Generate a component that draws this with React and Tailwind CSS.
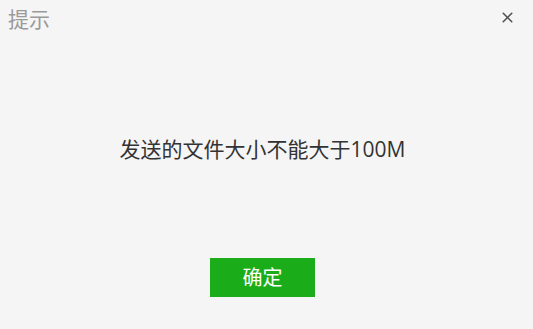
import { X } from "lucide-react";

const App = () => {
  return (
    <div
      className="w-[533px] h-[329px] bg-[#f5f5f5] flex flex-col overflow-hidden"
      style={{ fontFamily: '"Open Sans", "Noto Sans CJK SC", sans-serif' }}
    >
      <div className="h-10 flex items-start justify-between pl-2 pr-[17px] pt-[5px]">
        <span className="text-[21px] leading-7 text-[#9a9a9a]">提示</span>
        <button className="mt-[4px] text-[#505050]">
          <X size={17} strokeWidth={2.2} />
        </button>
      </div>

      <div className="h-[218px] w-[525px] flex items-center justify-center">
        <p className="text-[21px] leading-7 text-[#333]">
          发送的文件大小不能大于100M
        </p>
      </div>

      <div className="w-[525px] flex justify-center">
        <button className="w-[105px] h-[39px] bg-[#1aad19] text-white text-[20px] leading-none">
          确定
        </button>
      </div>
    </div>
  );
};

export default App;
